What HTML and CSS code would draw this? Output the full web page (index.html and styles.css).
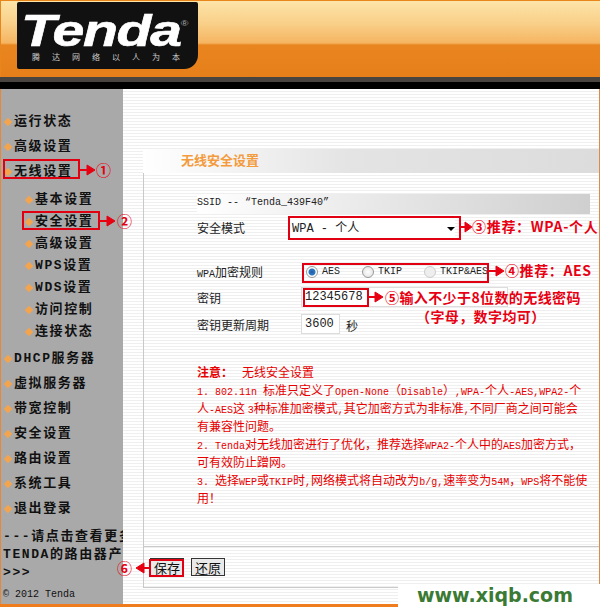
FILE: index.html
```html
<!DOCTYPE html>
<html lang="zh-CN">
<head>
    <meta charset="UTF-8">
    <title>无线安全设置</title>
    <link rel="stylesheet" href="styles.css">
</head>
<body>

<div class="page">
    <header class="top">
        <div class="logo">
            <div class="logo-word">Tenda<sup>®</sup></div>
            <div class="logo-sub">腾达网络以人为本</div>
        </div>
    </header>
    <div class="top-rule"></div>

    <div class="body">
        <nav class="side">
            <ul class="menu">
                <li>运行状态</li>
                <li>高级设置</li>
                <li>无线设置</li>
            </ul>
            <ul class="submenu">
                <li>基本设置</li>
                <li>安全设置</li>
                <li>高级设置</li>
                <li>WPS设置</li>
                <li>WDS设置</li>
                <li>访问控制</li>
                <li>连接状态</li>
            </ul>
            <ul class="menu">
                <li>DHCP服务器</li>
                <li>虚拟服务器</li>
                <li>带宽控制</li>
                <li>安全设置</li>
                <li>路由设置</li>
                <li>系统工具</li>
                <li>退出登录</li>
            </ul>
            <div class="more">
                <p>---请点击查看更多</p>
                <p>TENDA的路由器产</p>
                <p>&gt;&gt;&gt;</p>
            </div>
            <div class="copy">© 2012 Tenda</div>
        </nav>

        <main class="main">
            <h1 class="title">无线安全设置</h1>
            <div class="panel">
                <div class="panel-body">
                    <div class="ssid">SSID -- “Tenda_439F40”</div>
                    <div class="row row-mode">
                        <span class="lbl">安全模式</span>
                        <div class="select">WPA - 个人<i class="caret"></i></div>
                    </div>
                    <div class="row row-rule">
                        <span class="lbl"><span class="en">WPA</span>加密规则</span>
                        <div class="radios">
                            <label class="radio"><i class="dot on"></i>AES</label>
                            <label class="radio"><i class="dot"></i>TKIP</label>
                            <label class="radio"><i class="dot off"></i>TKIP&amp;AES</label>
                        </div>
                    </div>
                    <div class="row row-key">
                        <span class="lbl">密钥</span>
                        <div class="input key">12345678</div>
                    </div>
                    <div class="row row-period">
                        <span class="lbl">密钥更新周期</span>
                        <div class="input period">3600</div>
                        <span class="unit">秒</span>
                    </div>

                    <div class="note">
                        <p class="note-head"><b>注意：</b><span>无线安全设置</span></p>
                        <p><span class="en">1. 802.11n </span>标准只定义了<span class="en">Open-None</span>（<span class="en">Disable</span>）<span class="en">,WPA-</span>个人<span class="en">-AES,WPA2-</span>个<br>人<span class="en">-AES</span>这 <span class="en">3</span>种标准加密模式<span class="en">,</span>其它加密方式为非标准<span class="en">,</span>不同厂商之间可能会<br>有兼容性问题。</p>
                        <p><span class="en">2. Tenda</span>对无线加密进行了优化，推荐选择<span class="en">WPA2-</span>个人中的<span class="en">AES</span>加密方式，<br>可有效防止蹭网。</p>
                        <p><span class="en">3. </span>选择<span class="en">WEP</span>或<span class="en">TKIP</span>时<span class="en">,</span>网络模式将自动改为<span class="en">b/g,</span>速率变为<span class="en">54M</span>，<span class="en">WPS</span>将不能使<br>用！</p>
                    </div>
                </div>

                <div class="actions">
                    <button class="btn">保存</button>
                    <button class="btn">还原</button>
                </div>
            </div>
        </main>
    </div>
    <div class="bottom-rule"></div>

    <!-- red marks drawn over the page -->
    <div class="mark m1"></div>
    <div class="mark m2"></div>
    <div class="mark m3"></div>
    <div class="mark m4"></div>
    <div class="mark m5"></div>
    <div class="mark m6"></div>

    <svg class="arrows" width="600" height="607" viewBox="0 0 600 607">
        <g fill="#e60012" stroke="#e60012">
            <path d="M80 170H88" stroke-width="2"/><path d="M87 165l8 5-8 5z"/>
            <path d="M100 221H108" stroke-width="2"/><path d="M107 216l8 5-8 5z"/>
            <path d="M461 227H466" stroke-width="2"/><path d="M465 222l7 5-7 5z"/>
            <path d="M488 271H497" stroke-width="2"/><path d="M496 266l8 5-8 5z"/>
            <path d="M369 297H376" stroke-width="2"/><path d="M375 292l8 5-8 5z"/>
            <path d="M149 568H143" stroke-width="2"/><path d="M144 563l-8 5 8 5z"/>
        </g>
    </svg>
    <span class="num n1">①</span>
    <span class="num n2">②</span>
    <span class="num n6">⑥</span>
    <span class="tip t3">③推荐：WPA-个人</span>
    <span class="tip t4">④推荐：AES</span>
    <span class="tip t5">⑤输入不少于8位数的无线密码</span>
    <span class="tip t5b">（字母，数字均可）</span>

    <div class="stamp">www.xiqb.com</div>
</div>

</body>
</html>
```

FILE: styles.css
```css
html, body {
    margin: 0;
    padding: 0;
}

.page {
    position: relative;
    width: 600px;
    height: 607px;
    overflow: hidden;
    display: flex;
    flex-direction: column;
    font-family: "Noto Sans CJK SC", "Liberation Sans", sans-serif;
    background: #fff;
}

.en {
    font: 10px "Liberation Mono", monospace;
}

/* header */
.top {
    height: 77px;
    flex: none;
    padding-left: 17px;
    box-sizing: border-box;
    border-top: 1px solid #e8861c;
    border-left: 1px solid #e8861c;
    background: linear-gradient(#fde4a8 0, #f9d08a 22px, #f5b561 42px, #e9851f 44px, #e67f1a 76px);
}

.logo {
    width: 181px;
    height: 67px;
    margin-top: 1px;
    margin-left: -1px;
    background: #111;
    border-radius: 2px 2px 14px 2px;
    color: #fff;
}

.logo-word {
    box-sizing: border-box;
    height: 49px;
    padding: 8px 0 0 3px;
    font: italic bold 44px/41px "Liberation Sans", sans-serif;
    letter-spacing: -1px;
    -webkit-text-stroke: 0.6px #fff;
    transform-origin: 0 0;
    transform: scaleX(1.3);
}

.logo-word sup {
    font-size: 8px;
    font-style: normal;
    font-weight: normal;
    vertical-align: 20px;
    line-height: 0;
    letter-spacing: 0;
    color: #aaa;
    -webkit-text-stroke: 0;
}

.logo-sub {
    padding-left: 15px;
    font-size: 8px;
    line-height: 12px;
    letter-spacing: 12px;
    color: #ccc;
    white-space: nowrap;
}

.top-rule {
    flex: none;
    height: 5px;
    border-bottom: 7px solid #000;
    background: #4a4440;
}

.body {
    flex: 1;
    min-height: 0;
    display: flex;
    border-left: 1px solid #e8873a;
    border-right: 1px solid #d98a4c;
}

.bottom-rule {
    flex: none;
    height: 3px;
    background: #ef7d1e;
}

/* sidebar */
.side {
    width: 122px;
    flex: none;
    padding-top: 20px;
    box-sizing: border-box;
    background: #a9a9a9;
    overflow: hidden;
    color: #111;
    font-family: "Liberation Mono", "Noto Sans CJK SC", monospace;
    font-size: 13px;
    font-weight: 700;
    letter-spacing: 1.6px;
    white-space: nowrap;
}

.menu, .submenu {
    list-style: none;
    margin: 0;
    padding: 0;
}

.menu li, .submenu li {
    display: flex;
    align-items: center;
    height: 25px;
    line-height: 25px;
    padding-left: 4px;
}

.submenu {
    margin: 5px 0 3px;
}

.submenu li {
    height: 22px;
    line-height: 22px;
    padding-left: 25px;
}

.menu li::before, .submenu li::before {
    content: "";
    width: 6px;
    height: 6px;
    margin-right: 3px;
    flex: none;
    background: #f5a44e;
    transform: rotate(45deg);
}

.more {
    margin-top: 7px;
    padding-left: 2px;
}

.more p {
    margin: 0;
    height: 18px;
    line-height: 18px;
    overflow: hidden;
}

.copy {
    margin-top: 1px;
    padding-left: 2px;
    font: 10px/24px "Liberation Mono", monospace;
    letter-spacing: 0;
}

/* main area */
.main {
    flex: 1;
    min-width: 0;
    padding: 60px 0 16px 20px;
    background: repeating-linear-gradient(#fff 0, #fff 2px, #efefef 2px, #efefef 3px);
    display: flex;
    flex-direction: column;
}

.title {
    margin: 0;
    height: 24px;
    padding-left: 38px;
    flex: none;
    font-size: 13px;
    font-weight: 700;
    line-height: 22px;
    color: #f39b3d;
    background: linear-gradient(90deg, #fff, #e4e4e4 45%, #dcdcdc);
}

.panel {
    flex: 1;
    min-height: 0;
    display: flex;
    flex-direction: column;
    border-left: 1px solid #c9c9c9;
    border-bottom: 1px solid #c9c9c9;
    font-size: 12px;
    color: #222;
}

.panel-body {
    flex: 1;
    min-height: 0;
    padding: 21px 9px 0 53px;
}

.ssid {
    height: 20px;
    font: 10px/18px "Liberation Mono", monospace;
    background: linear-gradient(90deg, #fff, #e6e6e6 50%, #cfcfcf);
}

.row {
    display: flex;
    align-items: center;
}

.lbl {
    flex: none;
    width: 105px;
}

.row-mode {
    height: 26px;
}

.select {
    width: 165px;
    height: 18px;
    margin-left: -12px;
    padding-left: 2px;
    box-sizing: border-box;
    display: flex;
    justify-content: space-between;
    align-items: center;
    background: #fff;
    font: 12px "Liberation Mono", "Noto Sans CJK SC", monospace;
}

.caret {
    margin-top: 3px;
    border: 4px solid transparent;
    border-top: 4px solid #000;
    border-bottom: 0;
}

.row-rule {
    margin-top: 19px;
    height: 25px;
}

.radios {
    display: flex;
    padding-left: 4px;
    font: 10px/16px "Liberation Mono", monospace;
}

.radio {
    display: flex;
    align-items: center;
}

.radio:nth-child(1) { width: 56px; }
.radio:nth-child(2) { width: 62px; }

.dot {
    box-sizing: border-box;
    width: 12px;
    height: 12px;
    margin-right: 4px;
    border-radius: 50%;
    border: 1px solid #9a9a9a;
    background: radial-gradient(#fff, #ddd);
}

.dot.on {
    background: radial-gradient(#1f5fa8 0, #2f79c0 3px, #fff 4px);
}

.dot.off {
    border-color: #ccc;
    background: #eee;
}

.row-key {
    height: 26px;
}

.input {
    box-sizing: border-box;
    margin-left: -1px;
    height: 20px;
    padding-left: 3px;
    background: #fff;
    border: 1px solid #ddd;
    font: 12px/18px "Liberation Mono", monospace;
}

.key {
    width: 207px;
}

.row-period {
    height: 28px;
}

.period {
    width: 39px;
}

.unit {
    margin: 3px 0 0 6px;
}

.note {
    margin-top: 25px;
    color: #e60000;
    font-size: 12px;
    line-height: 18px;
    white-space: nowrap;
}

.note p {
    margin: 0;
}

.note-head b {
    display: inline-block;
    width: 45px;
}

.actions {
    flex: none;
    height: 41px;
    padding: 11px 0 0 6px;
    box-sizing: border-box;
    display: flex;
    align-items: flex-start;
    gap: 7px;
    border-top: 1px solid #c9c9c9;
}

.btn {
    width: 34px;
    height: 18px;
    padding: 0;
    border: 1px solid #333;
    background: #e9e9e9;
    font: 13px/15px "Noto Sans CJK SC", sans-serif;
    color: #111;
}

/* annotations */
.mark {
    position: absolute;
    border: 2px solid #e00012;
    box-sizing: border-box;
}

.m1 { left: 3px; top: 159px; width: 77px; height: 20px; }
.m2 { left: 22px; top: 211px; width: 78px; height: 19px; }
.m3 { left: 288px; top: 216px; width: 173px; height: 24px; }
.m4 { left: 302px; top: 263px; width: 187px; height: 20px; }
.m5 { left: 303px; top: 288px; width: 66px; height: 19px; }
.m6 { left: 149px; top: 559px; width: 35px; height: 18px; }

.arrows {
    position: absolute;
    left: 0;
    top: 0;
}

.num, .tip {
    position: absolute;
    color: #e60012;
    white-space: nowrap;
    font-weight: 700;
}

.num {
    font-size: 15px;
    line-height: 16px;
}

.n1 { left: 96px; top: 162px; }
.n2 { left: 117px; top: 213px; }
.n6 { left: 117px; top: 560px; }

.tip {
    font-size: 14px;
    line-height: 16px;
    letter-spacing: 0.4px;
    text-shadow: 0 0 2px #fff;
}

.t3 { left: 472px; top: 218px; letter-spacing: 0.7px; }
.t4 { left: 505px; top: 262px; letter-spacing: 0.6px; }
.t5 { left: 385px; top: 289px; }
.t5b { left: 416px; top: 308px; }

.stamp {
    position: absolute;
    left: 398px;
    top: 584px;
    width: 202px;
    height: 23px;
    padding-left: 19px;
    box-sizing: border-box;
    background: #fff;
    color: #3a7a34;
    font: bold 19px/23px "DejaVu Sans", sans-serif;
    white-space: nowrap;
}
```
